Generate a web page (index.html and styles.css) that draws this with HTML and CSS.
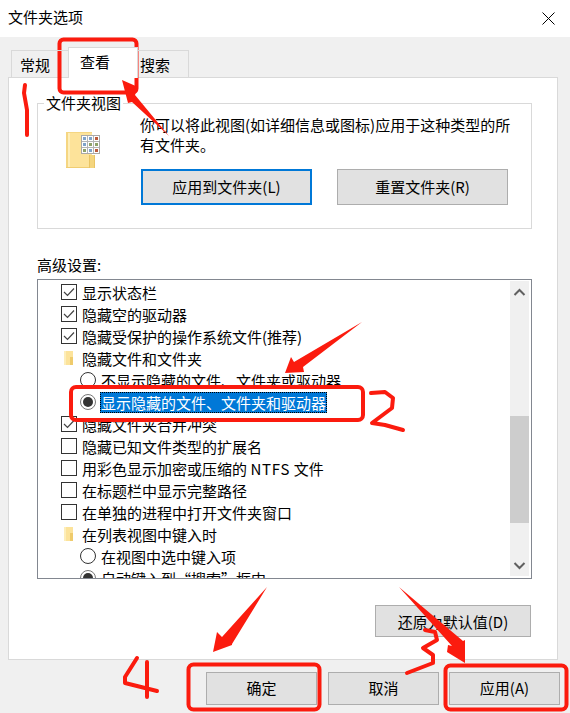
FILE: index.html
```html
<!DOCTYPE html>
<html lang="zh-CN">
<head>
<meta charset="utf-8">
<title>文件夹选项</title>
<link rel="stylesheet" href="styles.css">
</head>
<body>
<div class="dialog">
  <header class="titlebar">
    <span class="title-text">文件夹选项</span>
    <svg class="close" width="13" height="13" viewBox="0 0 13 13"><path d="M.5.5l12 12M12.500.5l-12 12" stroke="#000" fill="none"/></svg>
  </header>
  <nav class="tabs">
    <div class="tab">常规</div>
    <div class="tab tab-active">查看</div>
    <div class="tab">搜索</div>
  </nav>
  <main class="panel">
    <fieldset class="group">
      <legend class="legend">文件夹视图</legend>
      <div class="group-body">
        <div class="folder-box">
          <svg class="folder-big" width="35" height="37" viewBox="0 0 35 37">
            <path d="M0 0h26v36h-26z" fill="#fde39a"/>
            <path d="M0 0h2v36h-2zM0 0h26v1h-26z" fill="#f5d682"/>
            <path d="M2 1h2v35h-2z" fill="#feeeb9"/>
            <path d="M0 35h26v1h-26z" fill="#f0cd72"/>
            <path d="M23 23h6v13h-6z" fill="#f4d57e"/>
            <path d="M23 23h1v13h-1zM28 23h1v13h-1z" fill="#e9c464"/>
            <rect x="15.500" y="3.500" width="18" height="18" fill="#fff" stroke="#a9a9a9"/>
            <path d="M21.500 4v17M27.500 4v17M16 9.500h17M16 15.500h17" stroke="#b5b5b5"/>
            <path d="M17 5h3v3h-3zM23 5h3v3h-3zM17 11h3v3h-3zM23 17h3v3h-3z" fill="#7fa3c9"/>
            <path d="M23 11h3v3h-3zM29 11h3v3h-3zM17 17h3v3h-3z" fill="#8fa268"/>
            <path d="M29 5h3v3h-3zM29 17h3v3h-3z" fill="#bb5a3c"/>
          </svg>
        </div>
        <div class="group-main">
          <p class="desc">你可以将此视图(如详细信息或图标)应用于这种类型的所有文件夹。</p>
          <div class="group-buttons">
            <button class="btn btn-wide btn-default">应用到文件夹(L)</button>
            <button class="btn btn-wide">重置文件夹(R)</button>
          </div>
        </div>
      </div>
    </fieldset>

    <div class="adv-label">高级设置:</div>
    <div class="list">
      <div class="rows">
        <div class="row row-check"><span class="check"><svg width="14" height="14" viewBox="0 0 14 14"><path d="M2 7l3.500 3.500 6.500-7" fill="none" stroke="#444" stroke-width="1.200"/></svg></span>显示状态栏</div>
        <div class="row row-check"><span class="check"><svg width="14" height="14" viewBox="0 0 14 14"><path d="M2 7l3.500 3.500 6.500-7" fill="none" stroke="#444" stroke-width="1.200"/></svg></span>隐藏空的驱动器</div>
        <div class="row row-check"><span class="check"><svg width="14" height="14" viewBox="0 0 14 14"><path d="M2 7l3.500 3.500 6.500-7" fill="none" stroke="#444" stroke-width="1.200"/></svg></span>隐藏受保护的操作系统文件(推荐)</div>
        <div class="row row-folder"><svg class="folder-small" width="10" height="14" viewBox="0 0 10 14"><path d="M0 0h9v14h-9z" fill="#fce39b"/><path d="M0 0h2v14h-2z" fill="#fdeebb"/><path d="M6 6h3v8h-3z" fill="#efcb6c"/></svg>隐藏文件和文件夹</div>
        <div class="row row-radio"><span class="radio"></span>不显示隐藏的文件、文件夹或驱动器</div>
        <div class="row row-radio"><span class="radio on"></span><span class="selected">显示隐藏的文件、文件夹和驱动器</span></div>
        <div class="row row-check"><span class="check"><svg width="14" height="14" viewBox="0 0 14 14"><path d="M2 7l3.500 3.500 6.500-7" fill="none" stroke="#444" stroke-width="1.200"/></svg></span>隐藏文件夹合并冲突</div>
        <div class="row row-check"><span class="check"></span>隐藏已知文件类型的扩展名</div>
        <div class="row row-check"><span class="check"></span><span>用彩色显示加密或压缩的 <span class="latin">NTFS</span> 文件</span></div>
        <div class="row row-check"><span class="check"></span>在标题栏中显示完整路径</div>
        <div class="row row-check"><span class="check"></span>在单独的进程中打开文件夹窗口</div>
        <div class="row row-folder"><svg class="folder-small" width="10" height="14" viewBox="0 0 10 14"><path d="M0 0h9v14h-9z" fill="#fce39b"/><path d="M0 0h2v14h-2z" fill="#fdeebb"/><path d="M6 6h3v8h-3z" fill="#efcb6c"/></svg>在列表视图中键入时</div>
        <div class="row row-radio"><span class="radio"></span>在视图中选中键入项</div>
        <div class="row row-radio"><span class="radio on"></span>自动键入到“搜索”框中</div>
      </div>
      <div class="scrollbar">
        <svg class="arrow" width="19" height="22" viewBox="0 0 19 22"><path d="M4.500 14l5-5 5 5" fill="none" stroke="#606060" stroke-width="2"/></svg>
        <div class="thumb"></div>
        <svg class="arrow arrow-down" width="19" height="22" viewBox="0 0 19 22"><path d="M4.500 9l5 5 5-5" fill="none" stroke="#606060" stroke-width="2"/></svg>
      </div>
    </div>
    <div class="restore-row">
      <button class="btn btn-restore">还原为默认值(D)</button>
    </div>
  </main>
  <footer class="footer">
    <button class="btn btn-foot btn-ok">确定</button>
    <button class="btn btn-foot">取消</button>
    <button class="btn btn-foot">应用(A)</button>
  </footer>
</div>
<svg class="marks" width="570" height="713" viewBox="0 0 570 713">
  <g fill="none" stroke="#fb1b0e" stroke-width="4" stroke-linecap="round" stroke-linejoin="round">
    <rect x="59.500" y="39.500" width="77" height="53" rx="4"/>
    <path d="M25 85l-1 8 3 17 0 25"/>
    <rect x="71" y="387" width="292" height="33" rx="5"/>
    <path d="M371 393l14-1 8 6-1 10-20 15 13 2 18 5"/>
    <rect x="188.500" y="664.500" width="131" height="45" rx="5"/>
    <path d="M137 658l-12 19v6l32 8M147 662v35"/>
    <rect x="445.500" y="665.500" width="121" height="44" rx="5"/>
    <path d="M425 630l10 2 2 8-14 8 10 7v8l-26 10"/>
  </g>
  <g fill="#fb1b0e">
    <path d="M122 80l16 7-3 8 34 41-37-34-4 1z"/>
    <path d="M285 373l6-16 3 5 68-40-59 45 1 5z"/>
    <path d="M213 652l4-20 5 5 45-50-35 57 0 1z"/>
    <path d="M465 663l-18-11 1-7 4 1-53-59 64 54 2-1z"/>
  </g>
</svg>
</body>
</html>
```

FILE: styles.css
```css
* { box-sizing: border-box; }
html, body { margin: 0; padding: 0; }
body {
  width: 570px;
  height: 713px;
  overflow: hidden;
  position: relative;
  background: #f0f0f0;
  color: #000;
  font-family: "Noto Sans CJK SC", "Liberation Sans", sans-serif;
  font-size: 15px;
  line-height: 20px;
}
.dialog { display: flex; flex-direction: column; height: 713px; }
.titlebar {
  height: 37px;
  flex: none;
  background: #fff;
  display: flex;
  align-items: center;
  justify-content: space-between;
  padding: 0 15px 0 8px;
}
.title-text { padding-bottom: 3px; }
.close { display: block; }
.tabs {
  height: 40px;
  flex: none;
  display: flex;
  align-items: flex-end;
  padding-left: 11px;
  position: relative;
  z-index: 1;
}
.tab {
  height: 27px;
  padding: 4px 0 0 8px;
  width: 57px;
  border: 1px solid #d9d9d9;
  border-bottom: 0;
  border-right: 0;
}
.tab:last-child { width: 51px; border-right: 1px solid #d9d9d9; padding-left: 2px; }
.tab-active {
  height: 31px;
  width: 70px;
  padding: 4px 0 0 11px;
  background: #fff;
  border-right: 1px solid #d9d9d9;
  margin-bottom: -1px;
}
.tab-active + .tab { border-left: 0; }
.panel {
  width: 550px;
  height: 583px;
  flex: none;
  margin-left: 8px;
  padding: 15px 25px 0 28px;
  background: #fff;
  border: 1px solid #d9d9d9;
}
.group {
  margin: 0;
  padding: 0;
  border: 1px solid #d9d9d9;
  min-width: 0;
}
.legend { padding: 0 2px; margin-left: 6px; line-height: 20px; }
.group-body { display: flex; padding: 2px 0 23px 28px; }
.folder-box { width: 74px; flex: none; padding-top: 17px; }
.folder-big { display: block; }
.group-main { flex: 1; min-width: 0; }
.desc { margin: 0; width: 375px; }
.group-buttons { display: flex; gap: 25px; margin: 14px 0 0 1px; }
.btn {
  font: inherit;
  color: #000;
  background: #e1e1e1;
  border: 1px solid #adadad;
  padding: 0;
  border-radius: 0;
}
.btn-wide { width: 171px; height: 36px; }
.btn-default { border: 2px solid #0078d7; }
.adv-label { margin-top: 26px; }
.list {
  margin-top: 4px;
  height: 300px;
  display: flex;
  border: 1px solid #828790;
  padding: 1px 2px 2px 0;
  overflow: hidden;
}
.rows { flex: 1; min-width: 0; height: 300px; overflow: hidden; }
.row { height: 22px; padding-top: 2px; display: flex; align-items: center; white-space: nowrap; }
.row-check { padding-left: 23px; gap: 5px; }
.row-radio { padding-left: 42px; gap: 5px; }
.row-folder { padding-left: 26px; gap: 8px; }
.latin { letter-spacing: .8px; }
.check {
  width: 16px;
  height: 16px;
  flex: none;
  margin-top: -2px;
  border: 1px solid #333;
  background: #fff;
}
.check svg { display: block; }
.radio {
  width: 16px;
  height: 16px;
  flex: none;
  margin-top: -2px;
  border: 1px solid #333;
  border-radius: 50%;
  background: #fff;
  position: relative;
}
.radio.on { border-color: #777; }
.radio.on::after {
  content: "";
  position: absolute;
  left: 2px;
  top: 2px;
  width: 10px;
  height: 10px;
  border-radius: 50%;
  background: #333;
}
.selected {
  background: #0078d7;
  color: #fff;
  padding: 0 1px;
  margin: -2px 0 0 -1px;
  height: 21px;
  line-height: 22px;
  outline: 1px dotted #000;
  outline-offset: -1px;
}
.folder-small { flex: none; display: block; margin-top: -2px; }
.scrollbar {
  width: 19px;
  flex: none;
  background: #f0f0f0;
  display: flex;
  flex-direction: column;
}
.arrow { display: block; flex: none; }
.arrow-down { margin-top: auto; }
.thumb { height: 107px; margin-top: 113px; background: #cdcdcd; }
.restore-row { display: flex; justify-content: flex-end; margin: 26px 1px 0 0; }
.btn-restore { width: 156px; height: 32px; padding-top: 2px; }
.footer {
  display: flex;
  justify-content: flex-end;
  gap: 10px;
  padding: 12px 10px 0 0;
}
.btn-foot { width: 111px; height: 33px; padding-bottom: 2px; }
.btn-ok { margin-right: 1px; }
.marks { position: absolute; left: 0; top: 0; pointer-events: none; }
```
